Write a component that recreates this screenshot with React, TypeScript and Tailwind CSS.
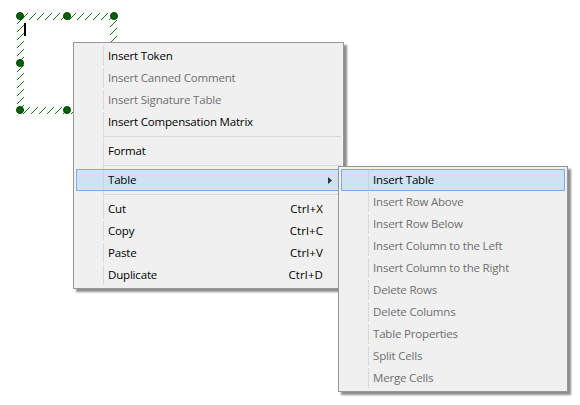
import React from "react";

type Item = { label?: string; disabled?: boolean; active?: boolean; shortcut?: string; arrow?: boolean; sep?: boolean };

const main: Item[] = [
  { label: "Insert Token" },
  { label: "Insert Canned Comment", disabled: true },
  { label: "Insert Signature Table", disabled: true },
  { label: "Insert Compensation Matrix" },
  { sep: true },
  { label: "Format" },
  { sep: true },
  { label: "Table", active: true, arrow: true },
  { sep: true },
  { label: "Cut", shortcut: "Ctrl+X" },
  { label: "Copy", shortcut: "Ctrl+C" },
  { label: "Paste", shortcut: "Ctrl+V" },
  { label: "Duplicate", shortcut: "Ctrl+D" },
];

const sub: Item[] = [
  { label: "Insert Table", active: true },
  { label: "Insert Row Above", disabled: true },
  { label: "Insert Row Below", disabled: true },
  { label: "Insert Column to the Left", disabled: true },
  { label: "Insert Column to the Right", disabled: true },
  { label: "Delete Rows", disabled: true },
  { label: "Delete Columns", disabled: true },
  { label: "Table Properties", disabled: true },
  { label: "Split Cells", disabled: true },
  { label: "Merge Cells", disabled: true },
];

function Row({ item }: { item: Item }) {
  if (item.sep) {
    return (
      <div className="flex h-[7px]">
        <div className="w-[28px] shrink-0 border-r border-[#d9d9d9]" />
        <div className="flex-1 flex items-center">
          <div className="w-full h-px bg-[#d7d7d7]" />
        </div>
      </div>
    );
  }
  return (
    <div
      className={
        "flex h-[22px] items-center border " +
        (item.active ? "border-[#7eaee6] bg-[#cfe1f3]" : "border-transparent")
      }
    >
      <div className={"w-[27px] h-full shrink-0 border-r " + (item.active ? "border-[#c3d3e2]" : "border-[#d9d9d9]")} />
      <span className={"pl-[4px] whitespace-nowrap " + (item.disabled ? "text-[#6f6f6f]" : "text-[#000000]")}>
        {item.label}
      </span>
      {item.shortcut && <span className="ml-auto pr-[17px] tracking-[0.1px] text-[#000000]">{item.shortcut}</span>}
      {item.arrow && (
        <svg className="ml-auto mr-[8px]" width="4" height="7" viewBox="0 0 4 7">
          <path d="M0 0 L4 3.5 L0 7 Z" fill="#333333" />
        </svg>
      )}
    </div>
  );
}

function Menu({ items, className }: { items: Item[]; className: string }) {
  return (
    <div
      className={
        "absolute border border-[#979797] bg-[#f0f0f0] p-[2px] shadow-[3px_3px_2px_rgba(0,0,0,0.45)] text-[11.5px] tracking-[-0.18px] leading-[16px] " +
        className
      }
      style={{ fontFamily: '"Open Sans", "Noto Sans", sans-serif' }}
    >
      {items.map((it, i) => (
        <Row key={i} item={it} />
      ))}
    </div>
  );
}

function Selection() {
  const handles = [
    [20, 16],
    [67, 16],
    [114, 16],
    [20, 63],
    [20, 110],
    [67, 110],
    [114, 110],
  ];
  return (
    <svg className="absolute left-0 top-0" width="130" height="125" viewBox="0 0 130 125">
      <defs>
        <pattern id="h" width="8" height="8" patternUnits="userSpaceOnUse" patternTransform="translate(0 1)">
          <path d="M0 8 L8 0" stroke="#0a7a0a" strokeWidth="1" />
        </pattern>
      </defs>
      <rect x="17" y="13" width="100" height="7" fill="url(#h)" />
      <rect x="17" y="107" width="100" height="7" fill="url(#h)" />
      <rect x="17" y="13" width="7" height="100" fill="url(#h)" />
      <rect x="110" y="13" width="7" height="100" fill="url(#h)" />
      {handles.map(([x, y], i) => (
        <circle key={i} cx={x} cy={y} r="3.5" fill="#006400" stroke="#0d3b0d" strokeWidth="1" />
      ))}
      <rect x="24" y="23" width="2" height="13" fill="#000" />
    </svg>
  );
}

export default function App() {
  return (
    <div className="relative w-[580px] h-[405px] bg-white overflow-hidden">
      <Selection />
      <Menu items={main} className="left-[73px] top-[42px] w-[271px]" />
      <Menu items={sub} className="left-[338px] top-[166px] w-[230px]" />
    </div>
  );
}
